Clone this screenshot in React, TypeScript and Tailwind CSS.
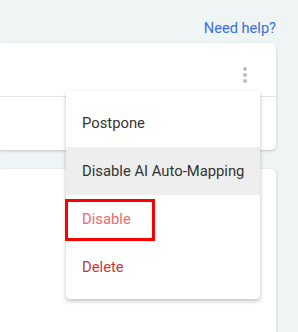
function MenuItem({ label, className }: { label: string; className?: string }) {
  return (
    <div className={"flex h-12 items-center whitespace-nowrap px-4 text-[14.8px] " + (className ?? "")}>
      {label}
    </div>
  );
}

export default function App() {
  return (
    <div
      className="relative h-[332px] w-[298px] overflow-hidden bg-[#eff4f5]"
      style={{ fontFamily: "Roboto, 'Noto Sans', sans-serif" }}
    >
      <div className="flex h-[43px] items-end justify-end pb-[6px] pr-[22px]">
        <span className="text-[14.6px] leading-[18px] text-[#3a6fe0]">Need help?</span>
      </div>

      {/* top card */}
      <div className="w-[276px] rounded-r-[5px] bg-white shadow-[0_1px_3px_rgba(0,0,0,0.2)]">
        <div className="flex h-[54px] items-center justify-end border-b border-[#e3e3e3] pr-[29px]">
          <div className="flex flex-col gap-[2px] pt-[10px]">
            <span className="h-[4px] w-[4px] rounded-full bg-[#bdbdbd]" />
            <span className="h-[4px] w-[4px] rounded-full bg-[#bdbdbd]" />
            <span className="h-[4px] w-[4px] rounded-full bg-[#bdbdbd]" />
          </div>
        </div>
        <div className="h-[53px]" />
      </div>

      {/* second card */}
      <div className="mt-[19px] h-[200px] w-[276px] rounded-tr-[5px] bg-white shadow-[0_1px_3px_rgba(0,0,0,0.2)]" />

      {/* dropdown menu */}
      <div className="absolute left-[66px] top-[91px] w-[194px] rounded-[4px] bg-white py-2 shadow-[0_2px_4px_rgba(0,0,0,0.25)]">
        <MenuItem label="Postpone" className="text-[#333333]" />
        <MenuItem label="Disable AI Auto-Mapping" className="bg-[#eeeeee] text-[#333333]" />
        <MenuItem label="Disable" className="text-[#ec6b6b]" />
        <MenuItem label="Delete" className="text-[#c43a3a]" />
      </div>

      {/* highlight box */}
      <div className="absolute left-[65px] top-[199px] h-[42px] w-[90px] border-[3px] border-[#ff0000]" />
    </div>
  );
}
